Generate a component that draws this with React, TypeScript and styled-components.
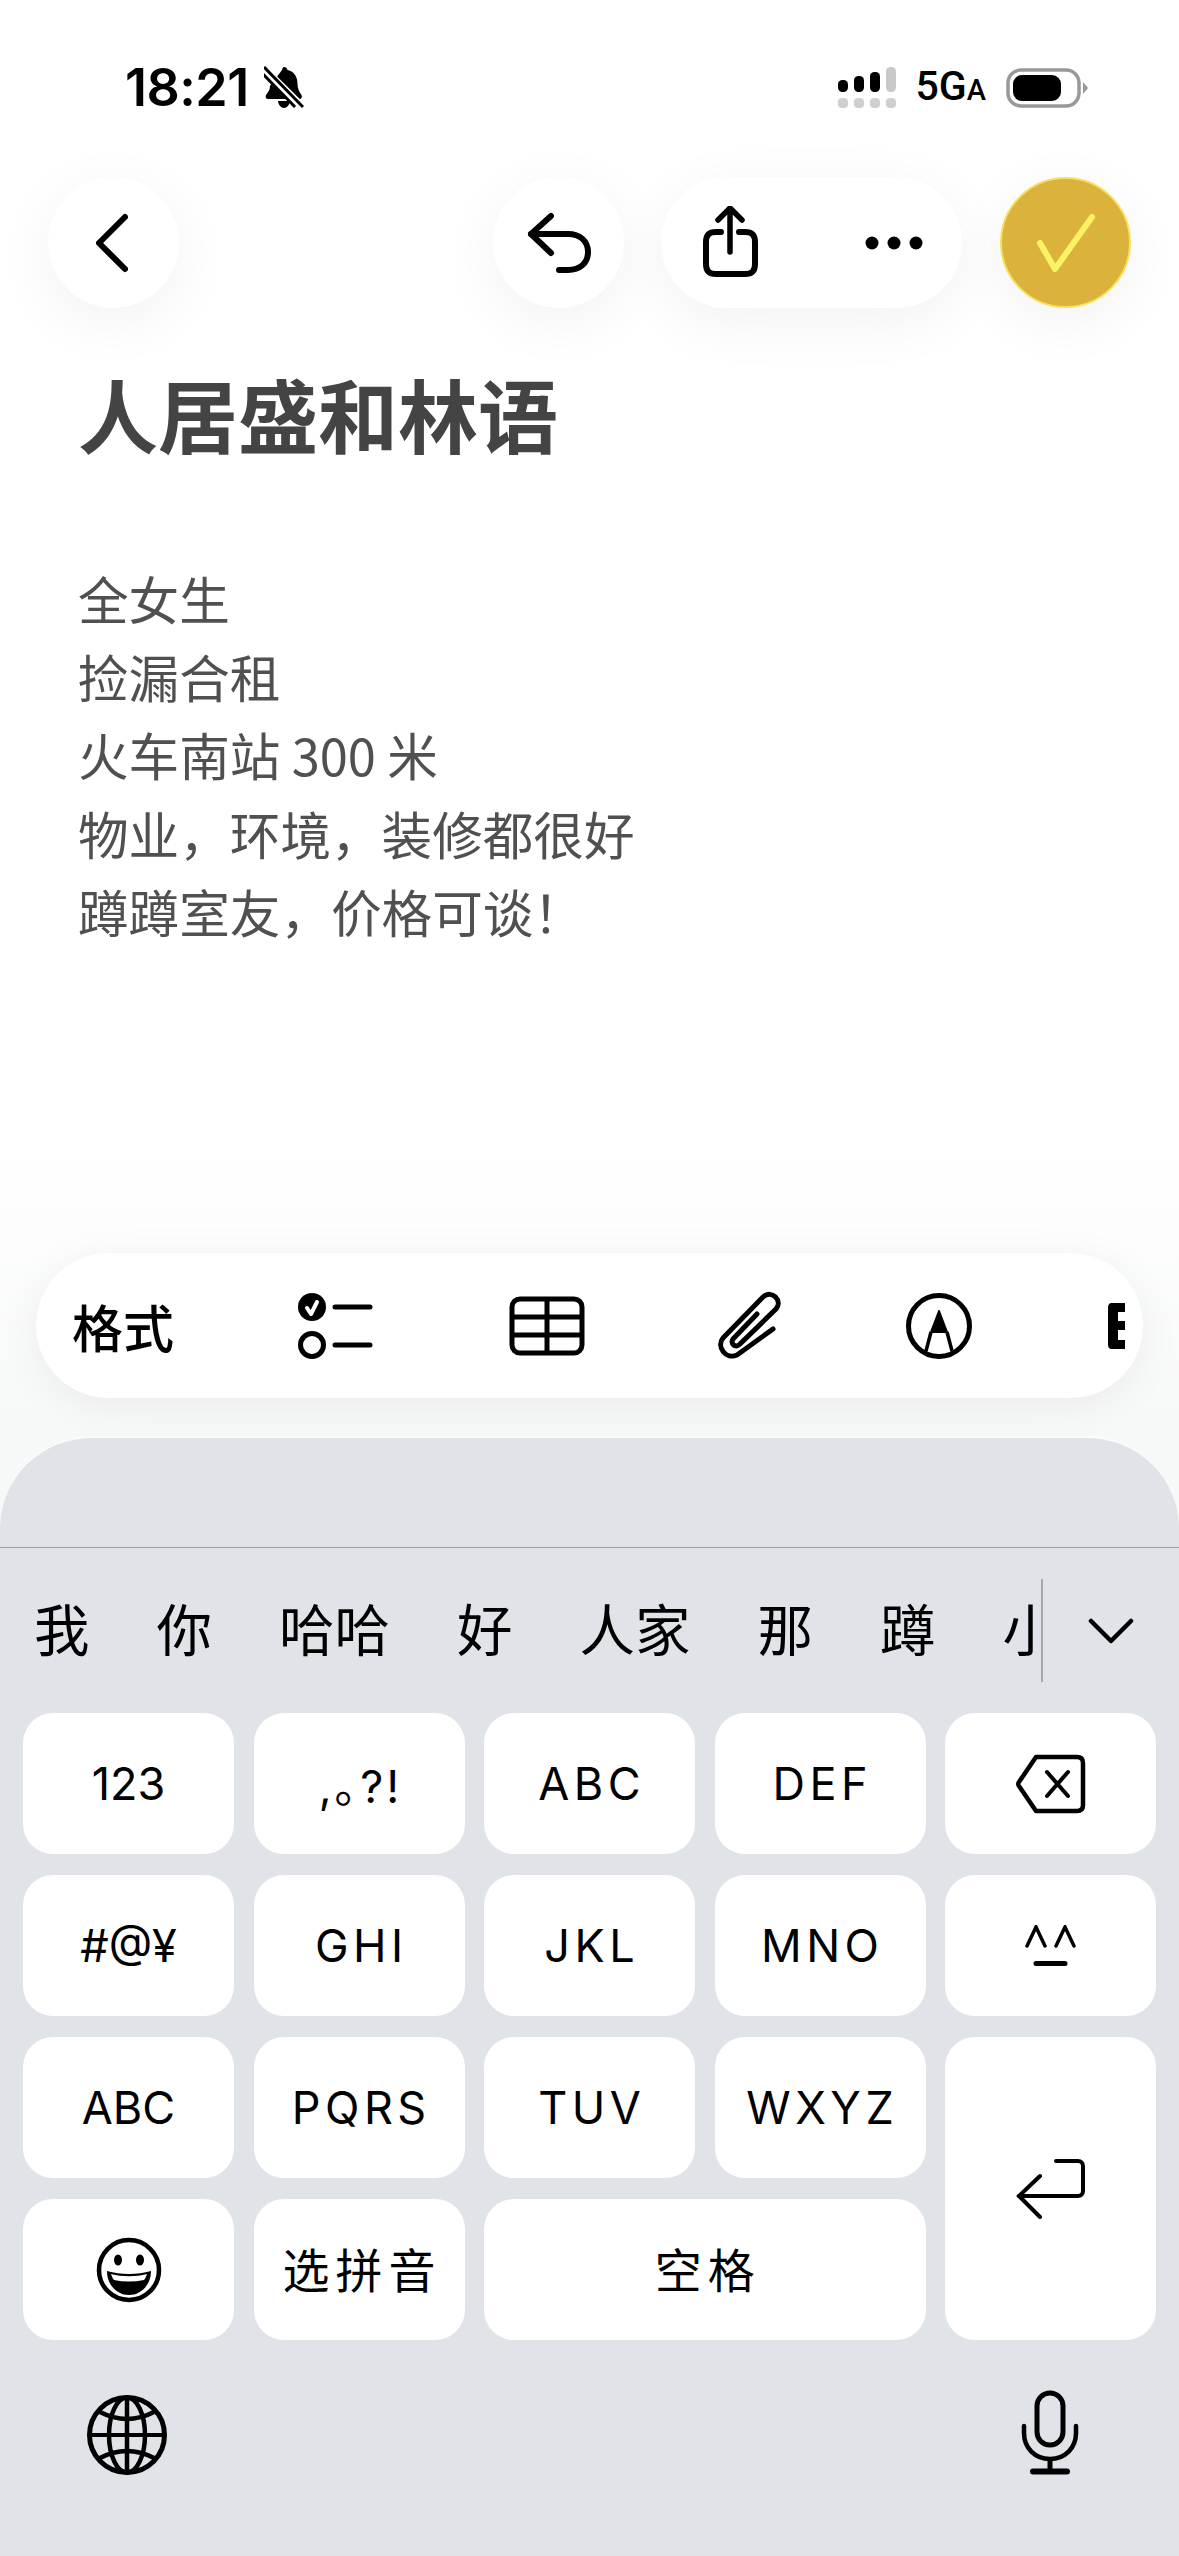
import React from 'react'
import styled, { createGlobalStyle } from 'styled-components'

const CJK = `'Noto Sans CJK SC', 'Inter', sans-serif`
const LATIN = `'Inter', 'Noto Sans CJK SC', sans-serif`

const GlobalStyle = createGlobalStyle`
  html, body {
    margin: 0;
    padding: 0;
    background: #fff;
  }
  * {
    box-sizing: border-box;
  }
`

const Page = styled.div`
  width: 1179px;
  height: 2556px;
  display: flex;
  flex-direction: column;
  overflow: hidden;
  background: linear-gradient(#fff 0, #fff 1150px, #f7f8f8 1430px);
  font-family: ${CJK};
`

const StatusBar = styled.div`
  height: 177px;
  padding: 60px 91px 0 125px;
  display: flex;
  justify-content: space-between;
  align-items: flex-start;
  flex-shrink: 0;
`

const StatusLeft = styled.div`
  display: flex;
  align-items: center;
  gap: 15px;
`

const Time = styled.span`
  font-family: ${LATIN};
  font-size: 52px;
  line-height: 56px;
  font-weight: 600;
  letter-spacing: -0.5px;
  color: #000;
`

const StatusRight = styled.div`
  display: flex;
  align-items: center;
  gap: 20px;
  height: 56px;
`

const Network = styled.span`
  font-family: 'Roboto', sans-serif;
  font-size: 41px;
  line-height: 40px;
  font-weight: 500;
  color: #000;
  white-space: nowrap;

  small {
    font-size: 29px;
  }
`

const Nav = styled.div`
  height: 131px;
  padding: 0 48px;
  display: flex;
  align-items: stretch;
  flex-shrink: 0;
`

const RoundButton = styled.div<{ $width?: number }>`
  width: ${p => p.$width ?? 131}px;
  height: 131px;
  border-radius: 66px;
  background: #fff;
  display: flex;
  align-items: center;
  justify-content: center;
  box-shadow: 0 14px 60px rgba(0, 0, 0, 0.055);
`

const BackButton = styled(RoundButton)`
  margin-right: auto;
  padding-right: 4px;
`

const PillButton = styled(RoundButton)`
  margin: 0 38px 0 37px;
  justify-content: flex-start;
  padding-left: 39px;
  gap: 103px;
`

const DoneButton = styled(RoundButton)`
  background: #dbb23c;
  border: 2px solid #f4e25f;
`

const Note = styled.div`
  flex: 1;
  padding: 54px 78px 0;
`

const Title = styled.h1`
  margin: 0 0 97px;
  font-size: 80px;
  line-height: 100px;
  font-weight: 700;
  color: #444;
`

const BodyLine = styled.div`
  font-size: 50.6px;
  line-height: 78.2px;
  font-weight: 400;
  color: #505050;
  white-space: nowrap;
`

const Toolbar = styled.div`
  margin: 0 36px 38px;
  height: 145px;
  border-radius: 73px;
  background: #fff;
  padding-left: 36px;
  display: flex;
  align-items: center;
  overflow: hidden;
  flex-shrink: 0;
  box-shadow: 0 8px 44px rgba(0, 0, 0, 0.06);
`

const ToolLabel = styled.span`
  font-size: 51px;
  line-height: 60px;
  font-weight: 500;
  color: #000;
  width: 225px;
  flex-shrink: 0;
`

const ToolSlot = styled.div<{ $width: number }>`
  width: ${p => p.$width}px;
  flex-shrink: 0;
  display: flex;
`

const Keyboard = styled.div`
  height: 1120px;
  flex-shrink: 0;
  background: #e0e3e8;
  border-radius: 92px 92px 0 0;
  border-top: 2px solid #fbfbfb;
  display: flex;
  flex-direction: column;
`

const KeyboardHeader = styled.div`
  height: 110px;
  border-bottom: 1px solid #9b9ea4;
  flex-shrink: 0;
`

const CandidateRow = styled.div`
  height: 165px;
  padding-left: 34px;
  display: flex;
  align-items: center;
  flex-shrink: 0;
`

const CandidateStrip = styled.div`
  width: 1009px;
  height: 103px;
  display: flex;
  align-items: center;
  gap: 67px;
  overflow: hidden;
  border-right: 2px solid #a5a8ad;
  flex-shrink: 0;
`

const Candidate = styled.span`
  font-size: 55.5px;
  line-height: 70px;
  padding-bottom: 7px;
  color: #000;
  white-space: nowrap;
  flex-shrink: 0;
`

const ExpandButton = styled.div`
  flex: 1;
  display: flex;
  justify-content: center;
`

const KeyGrid = styled.div`
  padding: 0 23px;
  display: grid;
  grid-template-columns: repeat(5, 1fr);
  grid-auto-rows: 141px;
  column-gap: 19.5px;
  row-gap: 21px;
  flex-shrink: 0;
`

const Key = styled.div<{ $spacing?: number; $colSpan?: number; $rowSpan?: number; $cjk?: boolean }>`
  grid-column: span ${p => p.$colSpan ?? 1};
  grid-row: span ${p => p.$rowSpan ?? 1};
  background: #fff;
  border-radius: 30px;
  display: flex;
  align-items: center;
  justify-content: center;
  color: #000;
  font-family: ${p => (p.$cjk ? CJK : LATIN)};
  font-size: ${p => (p.$cjk ? 47 : 45)}px;
  font-weight: 400;
  letter-spacing: ${p => p.$spacing ?? 0}px;
  padding-left: ${p => p.$spacing ?? 0}px;
  padding-bottom: ${p => (p.$cjk ? 4 : 0)}px;
`

const BottomRow = styled.div`
  flex: 1;
  padding: 50px 100px 0 87px;
  display: flex;
  justify-content: space-between;
  align-items: flex-start;
`

const GlobeWrap = styled.div`
  padding-top: 5px;
`

const Svg = styled.svg`
  display: block;
  flex-shrink: 0;
  fill: none;
  stroke: #000;
  stroke-linecap: round;
  stroke-linejoin: round;
`

const BellOff = () => (
  <Svg width="40" height="44" viewBox="0 0 40 44">
    <path
      fill="#000"
      stroke="none"
      d="M20 1c2 0 3 1 3.500 3 7 1.500 10 7 10 14 0 5 2 8 4 11 1 2 0 4-2 4H4c-2 0-3-2-2-4 2-3 4-5 4-9L18 4c.5-2 1-3 2-3zM14 35h12c-.5 4-3 7-6 7s-5.500-3-6-7z"
    />
    <path stroke="#fff" strokeWidth="8" d="M0 3l40 40" />
    <path stroke="#000" strokeWidth="3" strokeLinecap="butt" d="M0 1l39 40M-1 8l32 33" />
  </Svg>
)

const SignalBars = () => (
  <Svg width="58" height="42" viewBox="0 0 58 42" style={{ stroke: 'none' }}>
    <rect x="0" y="13" width="10" height="12" rx="4.500" fill="#000" />
    <rect x="16" y="9" width="10" height="16" rx="4.500" fill="#000" />
    <rect x="32" y="5" width="10" height="20" rx="4.500" fill="#000" />
    <rect x="48" y="0" width="10" height="25" rx="4.500" fill="#c9c9c9" />
    {[0, 16, 32, 48].map(x => (
      <rect key={x} x={x} y="31" width="10" height="10" rx="4" fill="#cfcfcf" />
    ))}
  </Svg>
)

const Battery = () => (
  <Svg width="82" height="40" viewBox="0 0 82 40" style={{ stroke: 'none' }}>
    <rect x="2" y="2" width="71" height="36" rx="13" fill="none" stroke="#999" strokeWidth="3.500" />
    <rect x="7" y="7" width="48" height="26" rx="9" fill="#000" />
    <path d="M77 14l5 6-5 6z" fill="#999" />
  </Svg>
)

const BackIcon = () => (
  <Svg width="32" height="60" viewBox="0 0 32 60" strokeWidth="6">
    <path d="M29 4L3 30l26 26" />
  </Svg>
)

const UndoIcon = () => (
  <Svg width="64" height="62" viewBox="0 0 64 62" strokeWidth="6">
    <path d="M24 4L4 22l20 19" />
    <path d="M4 22h37c12 0 20 7 20 18s-8 18-20 18h-9" />
  </Svg>
)

const ShareIcon = () => (
  <Svg width="62" height="74" viewBox="0 0 62 74" strokeWidth="5.500">
    <path d="M30 46V3M18 14L30 2l12 12" />
    <path strokeWidth="6" d="M21 26h-5C9 26 6 29 6 36v22c0 7 3 10 10 10h29c7 0 10-3 10-10V36c0-7-3-10-10-10h-6" />
  </Svg>
)

const DotsIcon = () => (
  <Svg width="58" height="14" viewBox="0 0 58 14" style={{ stroke: 'none' }}>
    <circle cx="7" cy="7" r="6.500" fill="#000" />
    <circle cx="29" cy="7" r="6.500" fill="#000" />
    <circle cx="51" cy="7" r="6.500" fill="#000" />
  </Svg>
)

const CheckIcon = () => (
  <Svg width="60" height="60" viewBox="0 0 60 60" strokeWidth="6" style={{ stroke: '#fbf364' }}>
    <path d="M4 30l15 26L56 4" />
  </Svg>
)

const ChecklistIcon = () => (
  <Svg width="76" height="68" viewBox="0 0 76 68" strokeWidth="5">
    <circle cx="15" cy="15" r="14" fill="#000" stroke="none" />
    <path stroke="#fff" strokeWidth="4" d="M10 16l4 6 6-12" />
    <circle cx="15" cy="53" r="11.500" />
    <path d="M38 15h35M38 53h35" />
  </Svg>
)

const TableIcon = () => (
  <Svg width="76" height="60" viewBox="0 0 76 60" strokeWidth="5">
    <rect x="3" y="3" width="70" height="54" rx="8" />
    <path d="M3 21h70M3 39h70M38 3v54" strokeLinecap="butt" />
  </Svg>
)

const ClipIcon = () => (
  <Svg width="66" height="72" viewBox="0 0 66 72" strokeWidth="5">
    <path d="M41 24L17 49c-3 4 2 10 7 5L60 19c7-8-4-20-13-12L7 48c-7 9 3 22 14 17L57 39" />
  </Svg>
)

const MarkupIcon = () => (
  <Svg width="66" height="66" viewBox="0 0 66 66" strokeWidth="5">
    <circle cx="33" cy="33" r="30.500" />
    <path fill="#000" strokeWidth="2" d="M33 18l-8 21h16z" />
    <path strokeWidth="3.500" strokeLinecap="butt" d="M25 39l-5 19M41 39l5 19" />
  </Svg>
)

const ClippedIcon = () => (
  <Svg width="17" height="46" viewBox="0 0 17 46" style={{ stroke: 'none' }}>
    <path fill="#000" d="M4 0H17V9H10V18H17V27H10V37H17V46H4C1 46 0 44 0 41V5C0 2 1 0 4 0Z" />
  </Svg>
)

const ChevronDown = () => (
  <Svg width="46" height="26" viewBox="0 0 46 26" strokeWidth="4.500">
    <path d="M3 3l20 20L43 3" />
  </Svg>
)

const DeleteIcon = () => (
  <Svg width="70" height="60" viewBox="0 0 70 60" strokeWidth="4.500">
    <path d="M20 3h41c4 0 6 2 6 6v42c0 4-2 6-6 6H20L3 32c-1-1-1-3 0-4z" />
    <path strokeWidth="4" d="M31 18l21 24M52 18L31 42" />
  </Svg>
)

const KaomojiIcon = () => (
  <Svg width="52" height="42" viewBox="0 0 52 42" strokeWidth="3.500" strokeLinecap="butt">
    <path strokeLinejoin="miter" d="M2 21L11 2l9 19M31 21l9-19 9 19" />
    <path strokeWidth="5" d="M11 38.500h29" />
  </Svg>
)

const ReturnIcon = () => (
  <Svg width="70" height="61" viewBox="0 0 70 61" strokeWidth="4">
    <path d="M24 18L3 38l21 21" strokeLinejoin="miter" />
    <path d="M3 38h59c3 0 5-2 5-5V8c0-3-2-5-5-5H40" />
  </Svg>
)

const SmileIcon = () => (
  <Svg width="66" height="66" viewBox="0 0 66 66" strokeWidth="4.500">
    <circle cx="33" cy="33" r="30" />
    <ellipse cx="22" cy="23" rx="4" ry="5.500" fill="#000" stroke="none" />
    <ellipse cx="44" cy="23" rx="4" ry="5.500" fill="#000" stroke="none" />
    <path fill="#000" stroke="none" d="M11 34c14 4 30 4 44 0 0 14-10 24-22 24S11 48 11 34z" />
    <path fill="#fff" stroke="none" d="M15 37c11 3 25 3 36 0-1 3-2 5-3 6-10 2-20 2-30 0-1-1-2-3-3-6z" />
  </Svg>
)

const GlobeIcon = () => (
  <Svg width="80" height="80" viewBox="0 0 80 80" strokeWidth="4.500">
    <circle cx="40" cy="40" r="37.500" strokeWidth="5" />
    <ellipse cx="40" cy="40" rx="18" ry="37.500" />
    <path d="M40 3v74" />
    <path strokeWidth="4" d="M3 40h74" strokeLinecap="butt" />
    <path d="M13 17Q40 31 67 17M13 63Q40 49 67 63" strokeLinecap="butt" />
  </Svg>
)

const MicIcon = () => (
  <Svg width="58" height="85" viewBox="0 0 58 85" strokeWidth="5">
    <rect x="16" y="3" width="26" height="52" rx="13" />
    <path d="M3 36v7c0 15 11 26 26 26s26-11 26-26v-7" strokeWidth="4.500" />
    <path d="M29 69v13" strokeLinecap="butt" />
    <path strokeWidth="6" d="M12 81.500h34" />
  </Svg>
)

const bodyLines = ['全女生', '捡漏合租', '火车南站 300 米', '物业，环境，装修都很好', '蹲蹲室友，价格可谈！']
const candidates = ['我', '你', '哈哈', '好', '人家', '那', '蹲', '小']

export default function App() {
  return (
    <Page>
      <GlobalStyle />
      <StatusBar>
        <StatusLeft>
          <Time>18:21</Time>
          <BellOff />
        </StatusLeft>
        <StatusRight>
          <SignalBars />
          <Network>
            5G<small>A</small>
          </Network>
          <Battery />
        </StatusRight>
      </StatusBar>

      <Nav>
        <BackButton>
          <BackIcon />
        </BackButton>
        <RoundButton>
          <UndoIcon />
        </RoundButton>
        <PillButton $width={301}>
          <ShareIcon />
          <DotsIcon />
        </PillButton>
        <DoneButton>
          <CheckIcon />
        </DoneButton>
      </Nav>

      <Note>
        <Title>人居盛和林语</Title>
        {bodyLines.map(line => (
          <BodyLine key={line}>{line}</BodyLine>
        ))}
      </Note>

      <Toolbar>
        <ToolLabel>格式</ToolLabel>
        <ToolSlot $width={212}>
          <ChecklistIcon />
        </ToolSlot>
        <ToolSlot $width={207}>
          <TableIcon />
        </ToolSlot>
        <ToolSlot $width={190}>
          <ClipIcon />
        </ToolSlot>
        <ToolSlot $width={202}>
          <MarkupIcon />
        </ToolSlot>
        <ToolSlot $width={17}>
          <ClippedIcon />
        </ToolSlot>
      </Toolbar>

      <Keyboard>
        <KeyboardHeader />
        <CandidateRow>
          <CandidateStrip>
            {candidates.map(c => (
              <Candidate key={c}>{c}</Candidate>
            ))}
          </CandidateStrip>
          <ExpandButton>
            <ChevronDown />
          </ExpandButton>
        </CandidateRow>
        <KeyGrid>
          <Key>123</Key>
          <Key $spacing={3}>,｡?!</Key>
          <Key $spacing={4.5}>ABC</Key>
          <Key $spacing={4.5}>DEF</Key>
          <Key>
            <DeleteIcon />
          </Key>
          <Key>#@¥</Key>
          <Key $spacing={4.5}>GHI</Key>
          <Key $spacing={4.5}>JKL</Key>
          <Key $spacing={4.5}>MNO</Key>
          <Key>
            <KaomojiIcon />
          </Key>
          <Key>ABC</Key>
          <Key $spacing={4.5}>PQRS</Key>
          <Key $spacing={4.5}>TUV</Key>
          <Key $spacing={4.5}>WXYZ</Key>
          <Key $rowSpan={2}>
            <ReturnIcon />
          </Key>
          <Key>
            <SmileIcon />
          </Key>
          <Key $cjk $spacing={6}>
            选拼音
          </Key>
          <Key $cjk $colSpan={2} $spacing={6}>
            空格
          </Key>
        </KeyGrid>
        <BottomRow>
          <GlobeWrap>
            <GlobeIcon />
          </GlobeWrap>
          <MicIcon />
        </BottomRow>
      </Keyboard>
    </Page>
  )
}
